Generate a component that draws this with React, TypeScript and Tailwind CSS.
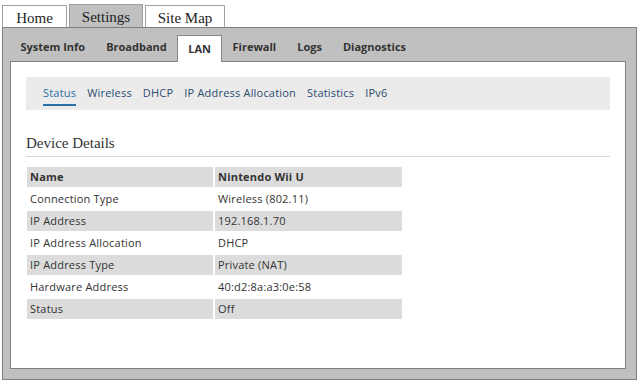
import React from "react";

const topTabs = [
  { label: "Home", active: false },
  { label: "Settings", active: true },
  { label: "Site Map", active: false },
];

const sectionTabs = ["System Info", "Broadband", "LAN", "Firewall", "Logs", "Diagnostics"];

const subLinks = ["Status", "Wireless", "DHCP", "IP Address Allocation", "Statistics", "IPv6"];

const rows = [
  ["Name", "Nintendo Wii U"],
  ["Connection Type", "Wireless (802.11)"],
  ["IP Address", "192.168.1.70"],
  ["IP Address Allocation", "DHCP"],
  ["IP Address Type", "Private (NAT)"],
  ["Hardware Address", "40:d2:8a:a3:0e:58"],
  ["Status", "Off"],
];

export default function App() {
  return (
    <div className="w-[640px] h-[388px] bg-white overflow-hidden flex flex-col">
      {/* top tabs */}
      <div className="flex items-end pl-[2px] pt-[3px] h-[27px] gap-[2px] font-['Liberation_Serif',serif] text-[15px] text-[#222] whitespace-nowrap">
        {topTabs.map((t) =>
          t.active ? (
            <div
              key={t.label}
              className="h-[24px] w-[74px] -mb-px flex items-start justify-center pt-[1px] bg-[#c0c0c0] border border-b-0 border-[#a0a0a0]"
            >
              {t.label}
            </div>
          ) : (
            <div
              key={t.label}
              className="h-[22px] flex items-start justify-center pt-[1px] bg-white border border-b-0 border-[#a0a0a0] first:w-[65px] last:w-[80px]"
            >
              {t.label}
            </div>
          )
        )}
      </div>

      {/* grey panel */}
      <div className="mx-[2px] mr-[3px] h-[353px] bg-[#c0c0c0] border border-[#808080] flex flex-col">
        <div className="flex items-end h-[33px] pl-[7px] font-['Open_Sans',sans-serif] font-bold text-[11px] text-[#333]">
          {sectionTabs.map((s) =>
            s === "LAN" ? (
              <div
                key={s}
                className="h-[27px] px-[10px] -mb-px flex items-center bg-white border border-b-0 border-[#888] relative z-10"
              >
                {s}
              </div>
            ) : (
              <div key={s} className="h-[27px] px-[10.5px] flex items-center">
                {s}
              </div>
            )
          )}
        </div>

        <div className="ml-[7px] mr-[10px] mb-[10px] flex-1 bg-white border border-[#808080] pt-[15px] px-[15px]">
          <div className="h-[33px] bg-[#ebebeb] flex items-center gap-[11px] pl-[17px] font-['Open_Sans',sans-serif] text-[11px] tracking-[0.2px] text-[#2b4b6f]">
            {subLinks.map((l, i) => (
              <span
                key={l}
                className={
                  i === 0
                    ? "text-[#2b6fa8] border-b-2 border-[#2b6fa8] pt-[4px] pb-[2px]"
                    : ""
                }
              >
                {l}
              </span>
            ))}
          </div>

          <div className="mt-[24px] pb-[4px] leading-[18px] border-b border-[#d8d8d8] font-['Liberation_Serif',serif] text-[15px] text-[#333]">
            Device Details
          </div>

          <table className="mt-[8px] -ml-px border-separate border-spacing-[2px] font-['Open_Sans',sans-serif] text-[11px] tracking-[0.2px] text-[#333]">
            <tbody>
              {rows.map(([k, v], i) => {
                const bg = i % 2 === 0 ? "bg-[#dcdcdc]" : "bg-white";
                const weight = i === 0 ? "font-bold" : "";
                return (
                  <tr key={k}>
                    <td className={`${bg} ${weight} w-[186px] h-[20px] px-[3px] py-0`}>{k}</td>
                    <td className={`${bg} ${weight} w-[187px] h-[20px] px-[3px] py-0`}>{v}</td>
                  </tr>
                );
              })}
            </tbody>
          </table>
        </div>
      </div>
    </div>
  );
}
